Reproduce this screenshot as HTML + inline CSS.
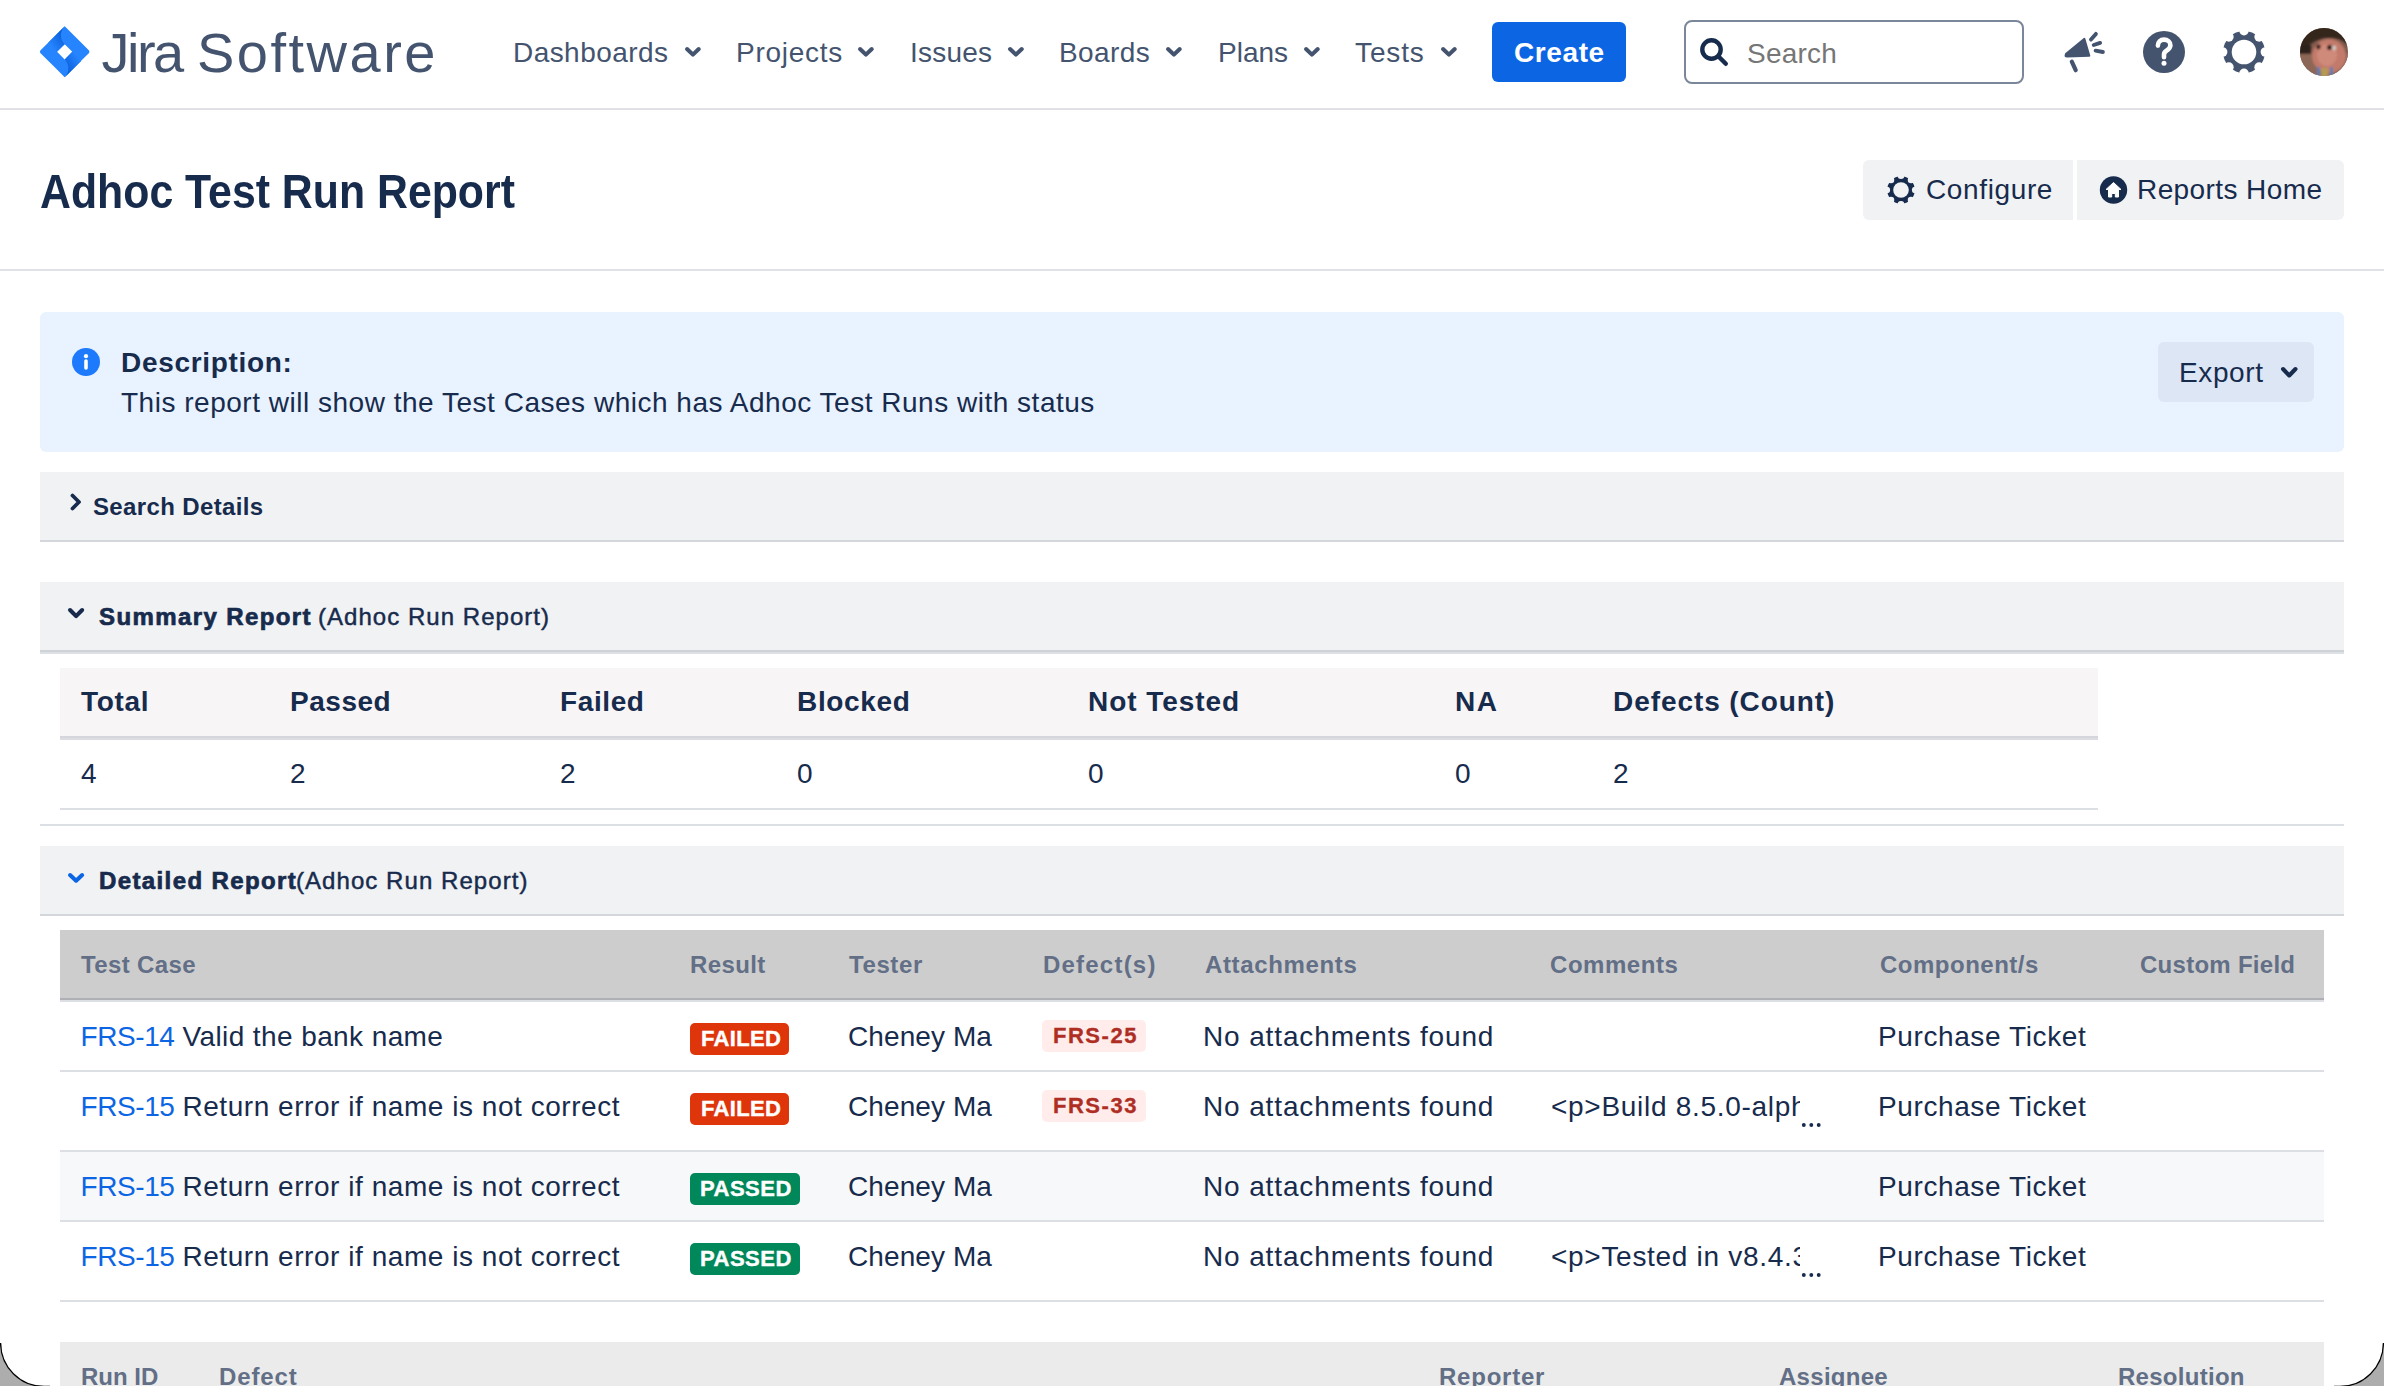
<!DOCTYPE html>
<html><head><meta charset="utf-8"><title>Adhoc Test Run Report</title>
<style>
html,body{margin:0;padding:0;}
body{width:2384px;height:1386px;overflow:hidden;position:relative;background:#fff;font-family:"Liberation Sans", sans-serif;}
</style></head><body>
<svg style="position:absolute;left:39px;top:24px;overflow:visible" width="54" height="56" viewBox="0 0 54 56">
<defs>
<linearGradient id="jg1" x1="100%" y1="0%" x2="20%" y2="80%"><stop offset="0%" stop-color="#0052CC"/><stop offset="100%" stop-color="#2684FF"/></linearGradient>
<linearGradient id="jg2" x1="0%" y1="100%" x2="80%" y2="20%"><stop offset="0%" stop-color="#0052CC"/><stop offset="100%" stop-color="#2684FF"/></linearGradient>
</defs>
<g transform="translate(-3.2,-2.6) scale(1.9)">
<path d="M27.9 15.2L16.3 3.6 15.2 2.5 6.5 11.2 2.5 15.2c-.4.4-.4 1.1 0 1.5l8 8 4.7 4.7 8.7-8.7.1-.1 3.9-3.9c.4-.4.4-1.1 0-1.5zM15.2 20l-4-4 4-4 4 4-4 4z" fill="#2684FF"/>
<path d="M15.2 12c-2.6-2.6-2.6-6.9 0-9.5L6.5 11.2l4.7 4.7 4-3.9z" fill="url(#jg1)"/>
<path d="M19.2 16l-4 4c2.6 2.6 2.6 6.9 0 9.5l8.7-8.7-4.7-4.8z" fill="url(#jg2)"/>
</g></svg>
<div style="position:absolute;left:101.5px;top:18.50px;font-size:56px;line-height:67px;font-weight:400;color:#44546F;white-space:nowrap;letter-spacing:-2.5px;">Jira</div>
<div style="position:absolute;left:197px;top:18.50px;font-size:56px;line-height:67px;font-weight:400;color:#44546F;white-space:nowrap;letter-spacing:2.5px;">Software</div>
<div style="position:absolute;left:513px;top:35.50px;font-size:28px;line-height:34px;font-weight:400;color:#44546F;white-space:nowrap;letter-spacing:0.444px;">Dashboards</div>
<svg style="position:absolute;left:684.6px;top:47.3px;overflow:visible" width="15.799999999999955" height="9.700000000000003" viewBox="0 0 15.799999999999955 9.700000000000003"><polyline points="2.05,2.05 7.899999999999977,7.650000000000003 13.749999999999954,2.05" fill="none" stroke="#44546F" stroke-width="4.1" stroke-linecap="round" stroke-linejoin="round"/></svg>
<div style="position:absolute;left:736px;top:35.50px;font-size:28px;line-height:34px;font-weight:400;color:#44546F;white-space:nowrap;letter-spacing:0.714px;">Projects</div>
<svg style="position:absolute;left:858px;top:47.3px;overflow:visible" width="15.799999999999955" height="9.700000000000003" viewBox="0 0 15.799999999999955 9.700000000000003"><polyline points="2.05,2.05 7.899999999999977,7.650000000000003 13.749999999999954,2.05" fill="none" stroke="#44546F" stroke-width="4.1" stroke-linecap="round" stroke-linejoin="round"/></svg>
<div style="position:absolute;left:910px;top:35.50px;font-size:28px;line-height:34px;font-weight:400;color:#44546F;white-space:nowrap;letter-spacing:0.2px;">Issues</div>
<svg style="position:absolute;left:1007.5px;top:47.3px;overflow:visible" width="15.799999999999955" height="9.700000000000003" viewBox="0 0 15.799999999999955 9.700000000000003"><polyline points="2.05,2.05 7.899999999999977,7.650000000000003 13.749999999999954,2.05" fill="none" stroke="#44546F" stroke-width="4.1" stroke-linecap="round" stroke-linejoin="round"/></svg>
<div style="position:absolute;left:1059px;top:35.50px;font-size:28px;line-height:34px;font-weight:400;color:#44546F;white-space:nowrap;letter-spacing:0.4px;">Boards</div>
<svg style="position:absolute;left:1166px;top:47.3px;overflow:visible" width="15.799999999999955" height="9.700000000000003" viewBox="0 0 15.799999999999955 9.700000000000003"><polyline points="2.05,2.05 7.899999999999977,7.650000000000003 13.749999999999954,2.05" fill="none" stroke="#44546F" stroke-width="4.1" stroke-linecap="round" stroke-linejoin="round"/></svg>
<div style="position:absolute;left:1218px;top:35.50px;font-size:28px;line-height:34px;font-weight:400;color:#44546F;white-space:nowrap;">Plans</div>
<svg style="position:absolute;left:1304px;top:47.3px;overflow:visible" width="15.799999999999955" height="9.700000000000003" viewBox="0 0 15.799999999999955 9.700000000000003"><polyline points="2.05,2.05 7.899999999999977,7.650000000000003 13.749999999999954,2.05" fill="none" stroke="#44546F" stroke-width="4.1" stroke-linecap="round" stroke-linejoin="round"/></svg>
<div style="position:absolute;left:1355px;top:35.50px;font-size:28px;line-height:34px;font-weight:400;color:#44546F;white-space:nowrap;letter-spacing:0.875px;">Tests</div>
<svg style="position:absolute;left:1441px;top:47.3px;overflow:visible" width="15.799999999999955" height="9.700000000000003" viewBox="0 0 15.799999999999955 9.700000000000003"><polyline points="2.05,2.05 7.899999999999977,7.650000000000003 13.749999999999954,2.05" fill="none" stroke="#44546F" stroke-width="4.1" stroke-linecap="round" stroke-linejoin="round"/></svg>
<div style="position:absolute;left:1492px;top:22px;width:134px;height:60px;background:#0C66E4;border-radius:6px;"></div>
<div style="position:absolute;left:1514px;top:35.90px;font-size:28px;line-height:34px;font-weight:700;color:#FFFFFF;white-space:nowrap;letter-spacing:0.6px;">Create</div>
<div style="position:absolute;left:1684px;top:20px;width:340px;height:64px;box-sizing:border-box;border:2px solid #7A869A;border-radius:8px;background:#fff;"></div>
<svg style="position:absolute;left:1698px;top:36px;overflow:visible" width="34" height="34" viewBox="0 0 34 34"><circle cx="13.5" cy="13.5" r="9.2" fill="none" stroke="#172B4D" stroke-width="4.4"/><line x1="20.3" y1="20.3" x2="27.8" y2="27.8" stroke="#172B4D" stroke-width="4.4" stroke-linecap="round"/></svg>
<div style="position:absolute;left:1747px;top:36.70px;font-size:28px;line-height:34px;font-weight:400;color:#767676;white-space:nowrap;letter-spacing:0.2px;">Search</div>
<svg style="position:absolute;left:2060px;top:30px;overflow:visible" width="48" height="46" viewBox="0 0 48 46"><path d="M5.2 23.2 L23.8 8.1 Q24.8 7.4 25.3 8.6 L30.3 25.6 Q30.6 26.6 29.4 26.7 L7.2 27.6 Q3.2 27.6 5.2 23.2 Z" fill="#44546F"/>
<line x1="11.8" y1="31.6" x2="15.7" y2="40.2" stroke="#44546F" stroke-width="4.2" stroke-linecap="round"/>
<line x1="31" y1="9.6" x2="35.9" y2="3.9" stroke="#44546F" stroke-width="3.9" stroke-linecap="round"/>
<line x1="33.7" y1="15" x2="40.1" y2="12.9" stroke="#44546F" stroke-width="3.9" stroke-linecap="round"/>
<line x1="35.6" y1="20.7" x2="42.9" y2="22" stroke="#44546F" stroke-width="3.9" stroke-linecap="round"/></svg>
<svg style="position:absolute;left:2142px;top:30px;overflow:visible" width="44" height="44" viewBox="0 0 44 44"><circle cx="22" cy="22" r="21" fill="#44546F"/>
<path d="M15.9 15.6 C15.9 11.6 18.6 9.6 22 9.6 C25.6 9.6 28.4 12 28.4 15.2 C28.4 18.3 26.3 19.6 24.4 20.8 C22.8 21.8 22 22.6 22 24.6 L22 27.2" fill="none" stroke="#fff" stroke-width="4.6" stroke-linecap="round"/>
<circle cx="22" cy="33.2" r="2.5" fill="#fff"/></svg>
<svg style="position:absolute;left:2222px;top:30px;overflow:visible" width="44" height="44" viewBox="0 0 44 44"><defs><mask id="gm1"><rect width="44" height="44" fill="#fff"/><circle cx="22.00" cy="0.60" r="4.8" fill="#000"/><circle cx="37.13" cy="6.87" r="4.8" fill="#000"/><circle cx="43.40" cy="22.00" r="4.8" fill="#000"/><circle cx="37.13" cy="37.13" r="4.8" fill="#000"/><circle cx="22.00" cy="43.40" r="4.8" fill="#000"/><circle cx="6.87" cy="37.13" r="4.8" fill="#000"/><circle cx="0.60" cy="22.00" r="4.8" fill="#000"/><circle cx="6.87" cy="6.87" r="4.8" fill="#000"/><circle cx="22.0" cy="22.0" r="12.3" fill="#000"/></mask></defs><circle cx="22.0" cy="22.0" r="21.0" fill="#44546F" mask="url(#gm1)"/></svg>
<svg style="position:absolute;left:2300px;top:28px;overflow:visible" width="48" height="48" viewBox="0 0 48 48"><defs><clipPath id="avc"><circle cx="24" cy="24" r="24"/></clipPath><filter id="avb" x="-20%" y="-20%" width="140%" height="140%"><feGaussianBlur stdDeviation="1.3"/></filter></defs>
<g clip-path="url(#avc)"><rect width="48" height="48" fill="#7E5A4C"/>
<g filter="url(#avb)">
<rect x="-4" y="26" width="56" height="26" fill="#8C6656"/>
<ellipse cx="29" cy="28" rx="17" ry="17" fill="#C27A6A"/>
<ellipse cx="27" cy="27" rx="10" ry="11" fill="#D08A7A"/>
<path d="M-4 -4 L52 -4 L52 24 C48 14 40 10 30 10 C20 10 14 13 8 18 L-4 22 Z" fill="#35261F"/>
<rect x="-2" y="17" width="13" height="9" fill="#2E231E"/>
<ellipse cx="18.5" cy="18.8" rx="2.2" ry="2.6" fill="#2A1B17"/>
<ellipse cx="29.5" cy="19.4" rx="2.4" ry="2.6" fill="#2A1B17"/>
<ellipse cx="34.2" cy="20" rx="2.2" ry="2.4" fill="#CFC7C2"/>
<rect x="17" y="39" width="3" height="10" fill="#5D7DB0"/><rect x="30" y="39" width="3" height="10" fill="#5D7DB0"/>
<rect x="21" y="40" width="7" height="10" fill="#B59A55"/>
</g></g></svg>
<div style="position:absolute;left:0px;top:108px;width:2384px;height:2px;background:#DFE1E6;"></div>
<div style="position:absolute;left:40px;top:162.50px;font-size:48px;line-height:58px;font-weight:700;color:#172B4D;white-space:nowrap;transform:scaleX(0.892);transform-origin:0 0;">Adhoc Test Run Report</div>
<div style="position:absolute;left:1863px;top:160px;width:210px;height:60px;background:#F1F2F4;border-radius:6px 0 0 6px;"></div>
<div style="position:absolute;left:2077px;top:160px;width:267px;height:60px;background:#F1F2F4;border-radius:0 6px 6px 0;"></div>
<svg style="position:absolute;left:1886px;top:175px;overflow:visible" width="30" height="30" viewBox="0 0 30 30"><defs><mask id="gm2"><rect width="30" height="30" fill="#fff"/><circle cx="15.00" cy="0.80" r="3.3" fill="#000"/><circle cx="25.04" cy="4.96" r="3.3" fill="#000"/><circle cx="29.20" cy="15.00" r="3.3" fill="#000"/><circle cx="25.04" cy="25.04" r="3.3" fill="#000"/><circle cx="15.00" cy="29.20" r="3.3" fill="#000"/><circle cx="4.96" cy="25.04" r="3.3" fill="#000"/><circle cx="0.80" cy="15.00" r="3.3" fill="#000"/><circle cx="4.96" cy="4.96" r="3.3" fill="#000"/><circle cx="15.0" cy="15.0" r="7.8" fill="#000"/></mask></defs><circle cx="15.0" cy="15.0" r="13.8" fill="#172B4D" mask="url(#gm2)"/></svg>
<div style="position:absolute;left:1926px;top:173.30px;font-size:28px;line-height:34px;font-weight:400;color:#172B4D;white-space:nowrap;letter-spacing:0.625px;">Configure</div>
<svg style="position:absolute;left:2099px;top:175px;overflow:visible" width="30" height="30" viewBox="0 0 30 30"><circle cx="14.5" cy="15" r="13.7" fill="#172B4D"/>
<path d="M14.5 7.5 L22 14.5 L19.5 14.5 L19.5 22 L16.3 22 L16.3 18.5 L12.7 18.5 L12.7 22 L9.5 22 L9.5 14.5 L7 14.5 Z" fill="#fff" stroke="#fff" stroke-width="1" stroke-linejoin="round"/></svg>
<div style="position:absolute;left:2137px;top:173.40px;font-size:28px;line-height:34px;font-weight:400;color:#172B4D;white-space:nowrap;letter-spacing:0.409px;">Reports Home</div>
<div style="position:absolute;left:0px;top:269px;width:2384px;height:2px;background:#DFE1E6;"></div>
<div style="position:absolute;left:40px;top:312px;width:2304px;height:140px;background:#E9F2FF;border-radius:6px;"></div>
<svg style="position:absolute;left:72px;top:348px;overflow:visible" width="28" height="28" viewBox="0 0 28 28"><circle cx="14" cy="14" r="14" fill="#1D7AFC"/><circle cx="14" cy="8.2" r="2.1" fill="#fff"/><line x1="14" y1="13" x2="14" y2="20" stroke="#fff" stroke-width="3.6" stroke-linecap="round"/></svg>
<div style="position:absolute;left:121px;top:345.50px;font-size:28px;line-height:34px;font-weight:700;color:#172B4D;white-space:nowrap;letter-spacing:0.673px;">Description:</div>
<div style="position:absolute;left:121px;top:385.50px;font-size:28px;line-height:34px;font-weight:400;color:#172B4D;white-space:nowrap;letter-spacing:0.514px;">This report will show the Test Cases which has Adhoc Test Runs with status</div>
<div style="position:absolute;left:2158px;top:342px;width:156px;height:60px;background:#DCE6F5;border-radius:6px;"></div>
<div style="position:absolute;left:2179px;top:356.10px;font-size:28px;line-height:34px;font-weight:400;color:#172B4D;white-space:nowrap;letter-spacing:0.6px;">Export</div>
<svg style="position:absolute;left:2281px;top:366.5px;overflow:visible" width="16.5" height="10.5" viewBox="0 0 16.5 10.5"><polyline points="2.05,2.05 8.25,8.45 14.45,2.05" fill="none" stroke="#172B4D" stroke-width="4.1" stroke-linecap="round" stroke-linejoin="round"/></svg>
<div style="position:absolute;left:40px;top:472px;width:2304px;height:70px;box-sizing:border-box;background:#F1F2F4;border-bottom:2px solid #D3D6DB;"></div>
<svg style="position:absolute;left:68px;top:492px;overflow:visible" width="16" height="20" viewBox="0 0 16 20"><polyline points="4.5,3.5 11,10 4.5,16.5" fill="none" stroke="#172B4D" stroke-width="3.8" stroke-linecap="round" stroke-linejoin="round"/></svg>
<div style="position:absolute;left:93px;top:491.70px;font-size:24px;line-height:29px;font-weight:700;color:#172B4D;white-space:nowrap;letter-spacing:0.362px;">Search Details</div>
<div style="position:absolute;left:40px;top:582px;width:2304px;height:70px;box-sizing:border-box;background:#F1F2F4;border-bottom:2px solid #CFD3D8;"></div>
<div style="position:absolute;left:40px;top:652px;width:2304px;height:2px;background:#DCDFE4;"></div>
<svg style="position:absolute;left:68px;top:608.3px;overflow:visible" width="16.200000000000003" height="10.200000000000045" viewBox="0 0 16.200000000000003 10.200000000000045"><polyline points="2.05,2.05 8.100000000000001,8.150000000000045 14.150000000000002,2.05" fill="none" stroke="#172B4D" stroke-width="4.1" stroke-linecap="round" stroke-linejoin="round"/></svg>
<div style="position:absolute;left:99px;top:601.60px;font-size:24px;line-height:29px;font-weight:700;color:#172B4D;white-space:nowrap;letter-spacing:1.4px;-webkit-text-stroke:0.7px #172B4D;">Summary Report</div>
<div style="position:absolute;left:318px;top:601.60px;font-size:24px;line-height:29px;font-weight:400;color:#172B4D;white-space:nowrap;letter-spacing:1.035px;-webkit-text-stroke:0.45px #172B4D;">(Adhoc Run Report)</div>
<div style="position:absolute;left:60px;top:668px;width:2038px;height:70px;box-sizing:border-box;background:#F7F5F6;border-bottom:2px solid #D5D6DB;"></div>
<div style="position:absolute;left:60px;top:738px;width:2038px;height:2px;background:#DCDDE2;"></div>
<div style="position:absolute;left:81px;top:685.00px;font-size:28px;line-height:34px;font-weight:700;color:#172B4D;white-space:nowrap;letter-spacing:0.675px;">Total</div>
<div style="position:absolute;left:81px;top:757.30px;font-size:28px;line-height:34px;font-weight:400;color:#172B4D;white-space:nowrap;">4</div>
<div style="position:absolute;left:290px;top:685.00px;font-size:28px;line-height:34px;font-weight:700;color:#172B4D;white-space:nowrap;letter-spacing:0.52px;">Passed</div>
<div style="position:absolute;left:290px;top:757.30px;font-size:28px;line-height:34px;font-weight:400;color:#172B4D;white-space:nowrap;">2</div>
<div style="position:absolute;left:560px;top:685.00px;font-size:28px;line-height:34px;font-weight:700;color:#172B4D;white-space:nowrap;letter-spacing:0.6px;">Failed</div>
<div style="position:absolute;left:560px;top:757.30px;font-size:28px;line-height:34px;font-weight:400;color:#172B4D;white-space:nowrap;">2</div>
<div style="position:absolute;left:797px;top:685.00px;font-size:28px;line-height:34px;font-weight:700;color:#172B4D;white-space:nowrap;letter-spacing:0.667px;">Blocked</div>
<div style="position:absolute;left:797px;top:757.30px;font-size:28px;line-height:34px;font-weight:400;color:#172B4D;white-space:nowrap;">0</div>
<div style="position:absolute;left:1088px;top:685.00px;font-size:28px;line-height:34px;font-weight:700;color:#172B4D;white-space:nowrap;letter-spacing:0.956px;">Not Tested</div>
<div style="position:absolute;left:1088px;top:757.30px;font-size:28px;line-height:34px;font-weight:400;color:#172B4D;white-space:nowrap;">0</div>
<div style="position:absolute;left:1455px;top:685.00px;font-size:28px;line-height:34px;font-weight:700;color:#172B4D;white-space:nowrap;letter-spacing:1.6px;">NA</div>
<div style="position:absolute;left:1455px;top:757.30px;font-size:28px;line-height:34px;font-weight:400;color:#172B4D;white-space:nowrap;">0</div>
<div style="position:absolute;left:1613px;top:685.00px;font-size:28px;line-height:34px;font-weight:700;color:#172B4D;white-space:nowrap;letter-spacing:0.929px;">Defects (Count)</div>
<div style="position:absolute;left:1613px;top:757.30px;font-size:28px;line-height:34px;font-weight:400;color:#172B4D;white-space:nowrap;">2</div>
<div style="position:absolute;left:60px;top:808px;width:2038px;height:2px;background:#DCDFE4;"></div>
<div style="position:absolute;left:40px;top:824px;width:2304px;height:2px;background:#DCDFE4;"></div>
<div style="position:absolute;left:40px;top:846px;width:2304px;height:70px;box-sizing:border-box;background:#F1F2F4;border-bottom:2px solid #D3D6DB;"></div>
<svg style="position:absolute;left:68px;top:873.3px;overflow:visible" width="16.200000000000003" height="9.700000000000045" viewBox="0 0 16.200000000000003 9.700000000000045"><polyline points="2.05,2.05 8.100000000000001,7.650000000000046 14.150000000000002,2.05" fill="none" stroke="#0C66E4" stroke-width="4.1" stroke-linecap="round" stroke-linejoin="round"/></svg>
<div style="position:absolute;left:99px;top:865.60px;font-size:24px;line-height:29px;font-weight:700;color:#172B4D;white-space:nowrap;letter-spacing:1.386px;-webkit-text-stroke:0.7px #172B4D;">Detailed Report</div>
<div style="position:absolute;left:296px;top:865.60px;font-size:24px;line-height:29px;font-weight:400;color:#172B4D;white-space:nowrap;letter-spacing:1.059px;-webkit-text-stroke:0.45px #172B4D;">(Adhoc Run Report)</div>
<div style="position:absolute;left:60px;top:930px;width:2264px;height:70px;box-sizing:border-box;background:#CDCDCD;border-bottom:2px solid #AFB0B5;"></div>
<div style="position:absolute;left:60px;top:1000px;width:2264px;height:2px;background:#DCDFE4;"></div>
<div style="position:absolute;left:81px;top:950.40px;font-size:24px;line-height:29px;font-weight:700;color:#626F86;white-space:nowrap;letter-spacing:0.375px;">Test Case</div>
<div style="position:absolute;left:690px;top:950.40px;font-size:24px;line-height:29px;font-weight:700;color:#626F86;white-space:nowrap;letter-spacing:0.4px;">Result</div>
<div style="position:absolute;left:849px;top:950.40px;font-size:24px;line-height:29px;font-weight:700;color:#626F86;white-space:nowrap;letter-spacing:0.6px;">Tester</div>
<div style="position:absolute;left:1043px;top:950.40px;font-size:24px;line-height:29px;font-weight:700;color:#626F86;white-space:nowrap;letter-spacing:1.213px;">Defect(s)</div>
<div style="position:absolute;left:1205px;top:950.40px;font-size:24px;line-height:29px;font-weight:700;color:#626F86;white-space:nowrap;letter-spacing:0.65px;">Attachments</div>
<div style="position:absolute;left:1550px;top:950.40px;font-size:24px;line-height:29px;font-weight:700;color:#626F86;white-space:nowrap;letter-spacing:0.543px;">Comments</div>
<div style="position:absolute;left:1880px;top:950.40px;font-size:24px;line-height:29px;font-weight:700;color:#626F86;white-space:nowrap;letter-spacing:0.5px;">Component/s</div>
<div style="position:absolute;left:2140px;top:950.40px;font-size:24px;line-height:29px;font-weight:700;color:#626F86;white-space:nowrap;letter-spacing:0.273px;">Custom Field</div>
<div style="position:absolute;left:60px;top:1002px;width:2264px;height:68px;background:#FFFFFF;"></div>
<div style="position:absolute;left:60px;top:1070px;width:2264px;height:2px;background:#DCDFE4;"></div>
<div style="position:absolute;left:80.5px;top:1019.50px;font-size:28px;line-height:34px;font-weight:400;color:#0C66E4;white-space:nowrap;letter-spacing:-0.42px;">FRS-14</div>
<div style="position:absolute;left:182.5px;top:1019.50px;font-size:28px;line-height:34px;font-weight:400;color:#172B4D;white-space:nowrap;letter-spacing:0.4px;">Valid the bank name</div>
<div style="position:absolute;left:690px;top:1023px;width:99px;height:32px;background:#DE350B;border-radius:5px;"></div>
<div style="position:absolute;left:701px;top:1025.50px;font-size:22px;line-height:26px;font-weight:700;color:#fff;white-space:nowrap;letter-spacing:0.32px;-webkit-text-stroke:0.4px #fff;">FAILED</div>
<div style="position:absolute;left:848px;top:1019.50px;font-size:28px;line-height:34px;font-weight:400;color:#172B4D;white-space:nowrap;letter-spacing:0.087px;">Cheney Ma</div>
<div style="position:absolute;left:1042px;top:1020px;width:104px;height:32px;background:#FFECEB;border-radius:5px;"></div>
<div style="position:absolute;left:1053px;top:1022.50px;font-size:22px;line-height:26px;font-weight:700;color:#AE2E24;white-space:nowrap;letter-spacing:1.52px;-webkit-text-stroke:0.3px #AE2E24;">FRS-25</div>
<div style="position:absolute;left:1203px;top:1019.50px;font-size:28px;line-height:34px;font-weight:400;color:#172B4D;white-space:nowrap;letter-spacing:0.868px;">No attachments found</div>
<div style="position:absolute;left:1878px;top:1019.50px;font-size:28px;line-height:34px;font-weight:400;color:#172B4D;white-space:nowrap;letter-spacing:0.607px;">Purchase Ticket</div>
<div style="position:absolute;left:60px;top:1072px;width:2264px;height:78px;background:#FFFFFF;"></div>
<div style="position:absolute;left:60px;top:1150px;width:2264px;height:2px;background:#DCDFE4;"></div>
<div style="position:absolute;left:80.5px;top:1089.50px;font-size:28px;line-height:34px;font-weight:400;color:#0C66E4;white-space:nowrap;letter-spacing:-0.42px;">FRS-15</div>
<div style="position:absolute;left:182.5px;top:1089.50px;font-size:28px;line-height:34px;font-weight:400;color:#172B4D;white-space:nowrap;letter-spacing:0.541px;">Return error if name is not correct</div>
<div style="position:absolute;left:690px;top:1093px;width:99px;height:32px;background:#DE350B;border-radius:5px;"></div>
<div style="position:absolute;left:701px;top:1095.50px;font-size:22px;line-height:26px;font-weight:700;color:#fff;white-space:nowrap;letter-spacing:0.32px;-webkit-text-stroke:0.4px #fff;">FAILED</div>
<div style="position:absolute;left:848px;top:1089.50px;font-size:28px;line-height:34px;font-weight:400;color:#172B4D;white-space:nowrap;letter-spacing:0.087px;">Cheney Ma</div>
<div style="position:absolute;left:1042px;top:1090px;width:104px;height:32px;background:#FFECEB;border-radius:5px;"></div>
<div style="position:absolute;left:1053px;top:1092.50px;font-size:22px;line-height:26px;font-weight:700;color:#AE2E24;white-space:nowrap;letter-spacing:1.52px;-webkit-text-stroke:0.3px #AE2E24;">FRS-33</div>
<div style="position:absolute;left:1203px;top:1089.50px;font-size:28px;line-height:34px;font-weight:400;color:#172B4D;white-space:nowrap;letter-spacing:0.868px;">No attachments found</div>
<div style="position:absolute;left:1548px;top:1072px;width:252px;height:78px;overflow:hidden">
<div style="position:absolute;left:3px;top:17.50px;font-size:28px;line-height:34px;font-weight:400;color:#172B4D;white-space:nowrap;letter-spacing:0.706px;">&lt;p&gt;Build 8.5.0-alph</div>
</div>
<svg style="position:absolute;left:1800px;top:1120.6px;overflow:visible" width="24" height="8" viewBox="0 0 24 8"><circle cx="3.8" cy="4" r="1.95" fill="#172B4D"/><circle cx="11.3" cy="4" r="1.95" fill="#172B4D"/><circle cx="18.7" cy="4" r="1.95" fill="#172B4D"/></svg>
<div style="position:absolute;left:1878px;top:1089.50px;font-size:28px;line-height:34px;font-weight:400;color:#172B4D;white-space:nowrap;letter-spacing:0.607px;">Purchase Ticket</div>
<div style="position:absolute;left:60px;top:1152px;width:2264px;height:68px;background:#F7F8F9;"></div>
<div style="position:absolute;left:60px;top:1220px;width:2264px;height:2px;background:#DCDFE4;"></div>
<div style="position:absolute;left:80.5px;top:1169.50px;font-size:28px;line-height:34px;font-weight:400;color:#0C66E4;white-space:nowrap;letter-spacing:-0.42px;">FRS-15</div>
<div style="position:absolute;left:182.5px;top:1169.50px;font-size:28px;line-height:34px;font-weight:400;color:#172B4D;white-space:nowrap;letter-spacing:0.541px;">Return error if name is not correct</div>
<div style="position:absolute;left:690px;top:1173px;width:110px;height:32px;background:#00875A;border-radius:5px;"></div>
<div style="position:absolute;left:700px;top:1175.50px;font-size:22px;line-height:26px;font-weight:700;color:#fff;white-space:nowrap;letter-spacing:0.5px;-webkit-text-stroke:0.4px #fff;">PASSED</div>
<div style="position:absolute;left:848px;top:1169.50px;font-size:28px;line-height:34px;font-weight:400;color:#172B4D;white-space:nowrap;letter-spacing:0.087px;">Cheney Ma</div>
<div style="position:absolute;left:1203px;top:1169.50px;font-size:28px;line-height:34px;font-weight:400;color:#172B4D;white-space:nowrap;letter-spacing:0.868px;">No attachments found</div>
<div style="position:absolute;left:1878px;top:1169.50px;font-size:28px;line-height:34px;font-weight:400;color:#172B4D;white-space:nowrap;letter-spacing:0.607px;">Purchase Ticket</div>
<div style="position:absolute;left:60px;top:1222px;width:2264px;height:78px;background:#FFFFFF;"></div>
<div style="position:absolute;left:60px;top:1300px;width:2264px;height:2px;background:#DCDFE4;"></div>
<div style="position:absolute;left:80.5px;top:1239.50px;font-size:28px;line-height:34px;font-weight:400;color:#0C66E4;white-space:nowrap;letter-spacing:-0.42px;">FRS-15</div>
<div style="position:absolute;left:182.5px;top:1239.50px;font-size:28px;line-height:34px;font-weight:400;color:#172B4D;white-space:nowrap;letter-spacing:0.541px;">Return error if name is not correct</div>
<div style="position:absolute;left:690px;top:1243px;width:110px;height:32px;background:#00875A;border-radius:5px;"></div>
<div style="position:absolute;left:700px;top:1245.50px;font-size:22px;line-height:26px;font-weight:700;color:#fff;white-space:nowrap;letter-spacing:0.5px;-webkit-text-stroke:0.4px #fff;">PASSED</div>
<div style="position:absolute;left:848px;top:1239.50px;font-size:28px;line-height:34px;font-weight:400;color:#172B4D;white-space:nowrap;letter-spacing:0.087px;">Cheney Ma</div>
<div style="position:absolute;left:1203px;top:1239.50px;font-size:28px;line-height:34px;font-weight:400;color:#172B4D;white-space:nowrap;letter-spacing:0.868px;">No attachments found</div>
<div style="position:absolute;left:1548px;top:1222px;width:252px;height:78px;overflow:hidden">
<div style="position:absolute;left:3px;top:17.50px;font-size:28px;line-height:34px;font-weight:400;color:#172B4D;white-space:nowrap;letter-spacing:0.706px;">&lt;p&gt;Tested in v8.4.3</div>
</div>
<svg style="position:absolute;left:1800px;top:1270.6px;overflow:visible" width="24" height="8" viewBox="0 0 24 8"><circle cx="3.8" cy="4" r="1.95" fill="#172B4D"/><circle cx="11.3" cy="4" r="1.95" fill="#172B4D"/><circle cx="18.7" cy="4" r="1.95" fill="#172B4D"/></svg>
<div style="position:absolute;left:1878px;top:1239.50px;font-size:28px;line-height:34px;font-weight:400;color:#172B4D;white-space:nowrap;letter-spacing:0.607px;">Purchase Ticket</div>
<div style="position:absolute;left:60px;top:1342px;width:2264px;height:60px;background:#EBEBEB;"></div>
<div style="position:absolute;left:81px;top:1362.00px;font-size:24px;line-height:29px;font-weight:700;color:#626F86;white-space:nowrap;">Run ID</div>
<div style="position:absolute;left:219px;top:1362.00px;font-size:24px;line-height:29px;font-weight:700;color:#626F86;white-space:nowrap;letter-spacing:0.9px;">Defect</div>
<div style="position:absolute;left:1439px;top:1362.00px;font-size:24px;line-height:29px;font-weight:700;color:#626F86;white-space:nowrap;letter-spacing:0.771px;">Reporter</div>
<div style="position:absolute;left:1779px;top:1362.00px;font-size:24px;line-height:29px;font-weight:700;color:#626F86;white-space:nowrap;letter-spacing:0.286px;">Assignee</div>
<div style="position:absolute;left:2118px;top:1362.00px;font-size:24px;line-height:29px;font-weight:700;color:#626F86;white-space:nowrap;letter-spacing:0.278px;">Resolution</div>
<svg style="position:absolute;left:0px;top:1341px;overflow:visible" width="50" height="45" viewBox="0 0 50 45"><path d="M0 0 L0 45 L50 45 L50 46 L44 46 A44 44 0 0 1 0 2 Z" fill="#ADADAD"/><path d="M0.6 2 A43.4 43.4 0 0 0 44 45.4 L50 45.4" fill="none" stroke="#000" stroke-width="1.3"/></svg>
<svg style="position:absolute;left:2334px;top:1341px;overflow:visible" width="50" height="45" viewBox="0 0 50 45"><g transform="translate(50,0) scale(-1,1)"><path d="M0 0 L0 45 L50 45 L50 46 L44 46 A44 44 0 0 1 0 2 Z" fill="#ADADAD"/><path d="M0.6 2 A43.4 43.4 0 0 0 44 45.4 L50 45.4" fill="none" stroke="#000" stroke-width="1.3"/></g></svg>
</body></html>
